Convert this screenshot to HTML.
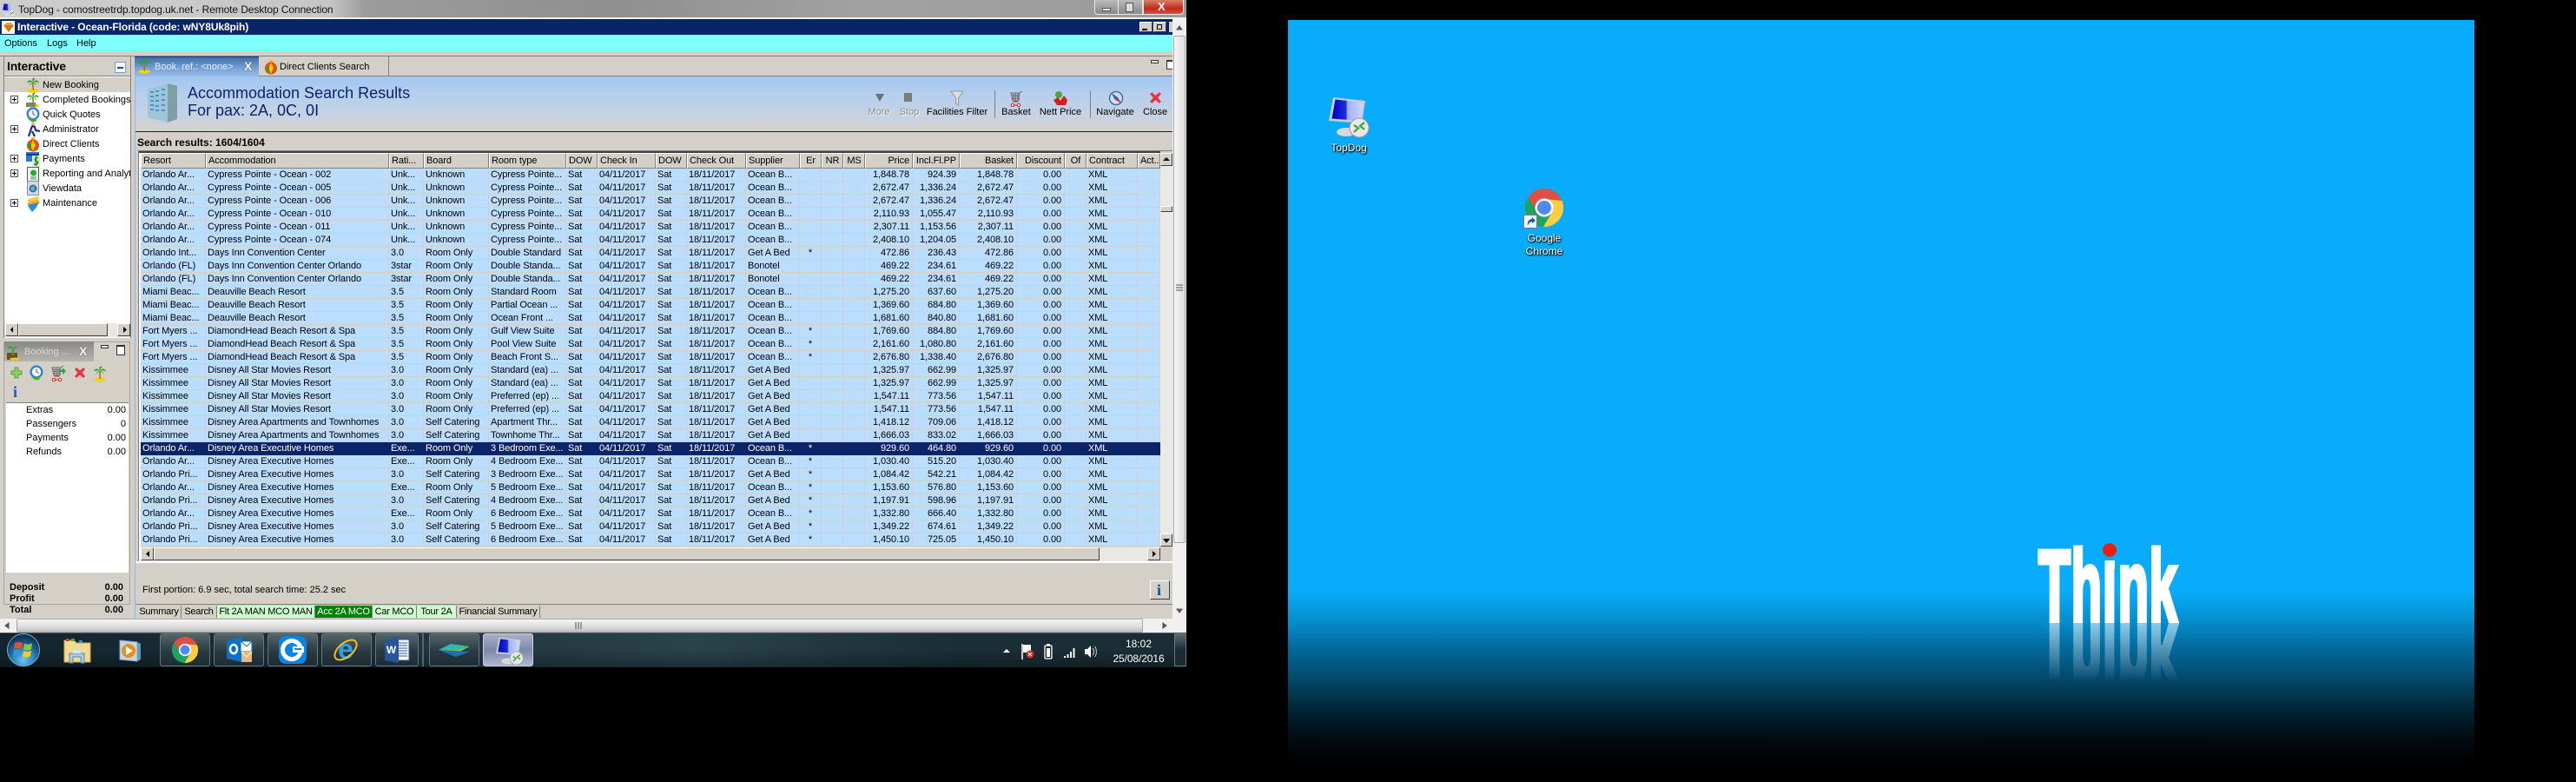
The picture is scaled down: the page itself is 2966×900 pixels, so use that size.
<!DOCTYPE html>
<html><head><meta charset="utf-8"><title>TopDog</title>
<style>
html,body{margin:0;padding:0;background:#000}
body{position:relative;width:2966px;height:900px;overflow:hidden;font-family:"Liberation Sans",sans-serif;font-size:11px;color:#000}
.a{position:absolute}
.t{position:absolute;white-space:nowrap;line-height:14px}
.r{text-align:right}
.b{font-weight:bold}
table{position:absolute;left:162px;top:176px;width:1174px;border-collapse:separate;border-spacing:0;table-layout:fixed;font-size:11px;letter-spacing:-.1px}
th{font-weight:normal;text-align:left;height:18px;padding:0 0 0 2px;background:#d4d0c8;border-top:1px solid #fff;border-left:1px solid #fff;border-right:1px solid #808080;border-bottom:1px solid #808080;box-sizing:border-box;overflow:hidden;white-space:nowrap;line-height:15px}
td{height:15px;box-sizing:border-box;padding:0 0 0 2px;background:#bbddff;border-right:1px solid #d4d0c8;border-bottom:1px solid #d4d0c8;white-space:nowrap;overflow:hidden;line-height:14px}
th.n,td.n{text-align:right;padding:0 3px 0 0}
th.c,td.c{text-align:center;padding:0}
tr.s td{background:#0a246a;color:#fff;border-color:#0a246a}
.btab{position:absolute;top:697px;height:14px;line-height:14px;text-align:center;border-right:1px solid #808080;background:#d4d0c8;white-space:nowrap;overflow:hidden;letter-spacing:-.25px}
.tb{position:absolute;top:729px;width:58px;height:38px;border:1px solid #66777d;border-radius:3px;box-sizing:border-box;background:linear-gradient(#52636a,#2a3a41 55%,#1e2c33)}
</style></head>
<body>
<svg width="0" height="0" style="position:absolute">
<defs>
<linearGradient id="scr" x1="0" y1="0" x2="1" y2="0"><stop offset="0" stop-color="#0000b8"/><stop offset=".45" stop-color="#1b2ee0"/><stop offset=".5" stop-color="#9fb0f5"/><stop offset="1" stop-color="#cfd8ff"/></linearGradient>
<symbol id="palm" viewBox="0 0 16 18"><ellipse cx="8" cy="15.5" rx="7" ry="2.3" fill="#f5d400"/><path d="M7 6L8.6 6 9 15 7.6 15Z" fill="#a5711c"/><path d="M8 6C5 2 2 3 1 7 3 5 5 5 8 6ZM8 6C6 1 9 0 11 1 9 2 9 4 8 6ZM8 6C11 2 14 3 15 7 13 5 11 5 8 6ZM8 6C5 6 4 8 4 10 5 8 6 7 8 6ZM8 6C11 6 12 8 12 10 11 8 10 7 8 6Z" fill="#2f9e1e"/></symbol>
<symbol id="clock" viewBox="0 0 16 18"><circle cx="8" cy="8" r="7.5" fill="#2a83d8"/><circle cx="8" cy="8" r="5.2" fill="#f4f4f4"/><path d="M8 4.5V8L10.5 9.5" stroke="#555" fill="none"/><path d="M1 10C3 15 9 17 14 11L11 17 7 17.5C4 16 2 14 1 10Z" fill="#46b020"/></symbol>
<symbol id="dc" viewBox="0 0 16 18"><circle cx="8" cy="3" r="2.3" fill="#f2b640"/><circle cx="8" cy="10.5" r="7" fill="#e24d1a"/><path d="M8 4L11 10 8 17 5 10Z" fill="#f5c900"/><path d="M2 9H6V14H3Z" fill="#2aa02a"/></symbol>
<symbol id="cross" viewBox="0 0 16 16"><path d="M2 4L4 2 8 5.5 12 2 14 4 10.500 8 14 12 12 14 8 10.500 4 14 2 12 5.500 8Z" fill="#e8343c"/></symbol>
<symbol id="cart" viewBox="0 0 16 20"><path d="M1 3H12L15 1M2 3L4 12H11L12 3M3 5.500H12M3.400 7.500H11.600M3.800 9.500H11.300M5 3V12M7.500 3V12M10 3V12" stroke="#707070" fill="none"/><circle cx="4" cy="17" r="1.700" fill="#fff" stroke="#d01c1c"/><circle cx="11" cy="17" r="1.700" fill="#fff" stroke="#d01c1c"/><path d="M5.700 17H9.300M5 13L10 13" stroke="#d01c1c"/></symbol>
<symbol id="chrome" viewBox="-22 -22 44 44"><path d="M-18.500,-12A22 22 0 0 1 20.600,-8L0,-10-9,4Z" fill="#dd5044"/><path d="M20.600,-8L0,-10 9,5-1,22A22 22 0 0 0 20.600,-8Z" fill="#ffcd40"/><path d="M-18.500,-12L-9,4 9,5-1,22A22 22 0 0 1-18.500,-12Z" fill="#1da462"/><circle r="10.500" fill="#fff"/><circle r="8" fill="#4c8bf5"/></symbol>
<symbol id="rdp" viewBox="0 0 47 47"><ellipse cx="20" cy="41" rx="11" ry="5" fill="#d9d9d9"/><path d="M5 1L42 5 38 31 0 28Z" fill="#c9ccd0"/><path d="M7.500 3.500L39.500 7 36 28 3.500 25.500Z" fill="url(#scr)"/><circle cx="35" cy="36" r="11" fill="#e8e8e8" stroke="#9a9a9a" stroke-width="1"/><path d="M29 33L34 36.500 29 41M41 30L36 34 41 38" stroke="#3aa838" stroke-width="2.200" fill="none"/></symbol>
<linearGradient id="fade" gradientUnits="userSpaceOnUse" x1="0" y1="717" x2="0" y2="785"><stop offset="0" stop-color="#fff" stop-opacity=".55"/><stop offset="1" stop-color="#fff" stop-opacity="0"/></linearGradient>
<mask id="rm" maskUnits="userSpaceOnUse" x="2340" y="717" width="180" height="70"><rect x="2340" y="717" width="180" height="70" fill="url(#fade)"/></mask>
</defs></svg>

<!-- ============ LEFT SCREEN ============ -->
<div class="a" style="left:0;top:0;width:1366px;height:768px;background:#d4d0c8"></div>

<!-- RDP title bar -->
<div class="a" style="left:0;top:0;width:1366px;height:20px;background:linear-gradient(90deg,#cdcdcd 0,#c6c6c6 380px,#9c9c9c 420px,#8f8f8f 700px,#a2a2a2 1000px,#9a9a9a 1366px)"></div>
<div class="a" style="left:0;top:20px;width:1366px;height:2px;background:#f0f0f0"></div>
<svg class="a" style="left:2px;top:3px" width="16" height="16" viewBox="0 0 47 47"><use href="#rdp"/></svg>
<div class="t" style="left:21px;top:4px;font-size:12px;letter-spacing:-.1px;color:#111">TopDog - comostreetrdp.topdog.uk.net - Remote Desktop Connection</div>
<div class="a" style="left:1260px;top:0;width:56px;height:17px;background:linear-gradient(#bbb,#888);border:1px solid #e6e6e6;border-top:0;box-sizing:border-box;border-radius:0 0 0 4px"></div>
<div class="a" style="left:1287px;top:0;width:1px;height:17px;background:#eee"></div>
<div class="a" style="left:1269px;top:9px;width:10px;height:4px;background:#eee;border:1px solid #555;box-sizing:border-box"></div>
<div class="a" style="left:1296px;top:3px;width:9px;height:11px;background:#ddd;border:1px solid #555;box-sizing:border-box"></div>
<div class="a" style="left:1316px;top:0;width:47px;height:17px;background:linear-gradient(#d8806a,#c22b18 60%,#d4523a);border:1px solid #e6e6e6;border-top:0;box-sizing:border-box;border-radius:0 0 4px 0"></div>
<div class="t b" style="left:1333px;top:1px;font-size:13px;color:#fff">X</div>

<!-- App title bar -->
<div class="a" style="left:0;top:22px;width:1350px;height:18px;background:#0a246a"></div>
<div class="a" style="left:2px;top:24px;width:15px;height:15px;background:#fff"></div>
<svg class="a" style="left:3px;top:26px" width="14" height="12" viewBox="0 0 14 12"><path d="M1 3L5 0H10L13 3 7 11Z" fill="#f2a428"/><path d="M1 3H13L7 11Z" fill="#d97a10"/></svg>
<div class="t b" style="left:20px;top:24px;font-size:12px;letter-spacing:-.1px;color:#fff">Interactive - Ocean-Florida (code: wNY8Uk8pih)</div>
<div class="a" style="left:1312px;top:25px;width:15px;height:12px;background:#d4d0c8;border:1px solid;border-color:#fff #404040 #404040 #fff;box-sizing:border-box"></div>
<div class="a" style="left:1315px;top:33px;width:6px;height:2px;background:#000"></div>
<div class="a" style="left:1328px;top:25px;width:15px;height:12px;background:#d4d0c8;border:1px solid;border-color:#fff #404040 #404040 #fff;box-sizing:border-box"></div>
<div class="a" style="left:1332px;top:28px;width:6px;height:6px;border:1px solid #000;box-sizing:border-box"></div>
<div class="a" style="left:1346px;top:25px;width:4px;height:12px;background:#d4d0c8"></div>

<!-- Menu -->
<div class="a" style="left:0;top:40px;width:1350px;height:19px;background:#80ffff"></div>
<div class="t" style="left:5px;top:43px">Options</div>
<div class="t" style="left:54px;top:43px">Logs</div>
<div class="t" style="left:88px;top:43px">Help</div>

<!-- Left pane 1 -->
<div class="a" style="left:0;top:64px;width:1350px;height:1px;background:#808080"></div>
<div class="a" style="left:4px;top:65px;width:147px;height:324px;background:#fff;border-right:1px solid #808080;border-left:1px solid #808080;box-sizing:border-box"></div>
<div class="a" style="left:5px;top:65px;width:145px;height:23px;background:#d4d0c8;border-bottom:1px solid #808080;box-sizing:border-box"></div>
<div class="t b" style="left:8px;top:69px;font-size:14px;letter-spacing:-.2px">Interactive</div>
<div class="a" style="left:132px;top:71px;width:13px;height:13px;background:#fff;border:1px solid #7f9db9;box-sizing:border-box"></div>
<div class="a" style="left:135px;top:77px;width:7px;height:2px;background:#1a4a9c"></div>
<div class="a" style="left:5px;top:89px;width:145px;height:17px;background:#d4d0c8"></div>
<div class="t" style="left:49px;top:91px">New Booking</div>
<div class="t" style="left:49px;top:108px">Completed Bookings</div>
<div class="t" style="left:49px;top:125px">Quick Quotes</div>
<div class="t" style="left:49px;top:142px">Administrator</div>
<div class="t" style="left:49px;top:159px">Direct Clients</div>
<div class="t" style="left:49px;top:176px">Payments</div>
<div class="a" style="left:49px;top:193px;width:101px;height:14px;overflow:hidden"><div class="t" style="left:0;top:0">Reporting and Analytics</div></div>
<div class="t" style="left:49px;top:210px">Viewdata</div>
<div class="t" style="left:49px;top:227px">Maintenance</div>
<!-- tree expanders -->
<svg class="a" style="left:0;top:88px" width="50" height="160" viewBox="0 0 50 160">
<g fill="#fff" stroke="#555"><rect x="12.500" y="22.500" width="8" height="8"/><rect x="12.500" y="56.500" width="8" height="8"/><rect x="12.500" y="90.500" width="8" height="8"/><rect x="12.500" y="107.500" width="8" height="8"/><rect x="12.500" y="141.500" width="8" height="8"/></g>
<path d="M14 26.500H19M16.500 24V29M14 60.500H19M16.500 58V63M14 94.500H19M16.500 92V97M14 111.500H19M16.500 109V114M14 145.500H19M16.500 143V148" stroke="#000"/>
</svg>
<!-- tree icons -->
<svg class="a" style="left:30px;top:89px" width="16" height="18"><use href="#palm" width="16" height="18"/></svg>
<svg class="a" style="left:30px;top:106px" width="16" height="18"><use href="#palm" width="16" height="18"/><rect x="0" y="12" width="11" height="5" fill="#7a8a58"/></svg>
<svg class="a" style="left:30px;top:123px" width="16" height="18"><use href="#clock" width="16" height="18"/></svg>
<svg class="a" style="left:32px;top:140px" width="15" height="18" viewBox="0 0 15 18"><circle cx="6" cy="3" r="2.200" fill="#e9b46a"/><path d="M5 5L8 6 9 10 14 11M5 5L3 11 1 17M5 11L8 17" stroke="#1a2f86" stroke-width="2.200" fill="none"/></svg>
<svg class="a" style="left:30px;top:157px" width="16" height="18"><use href="#dc" width="16" height="18"/></svg>
<svg class="a" style="left:30px;top:175px" width="16" height="18" viewBox="0 0 16 18"><rect width="15" height="11" fill="#2a78d8"/><rect y="2" width="15" height="2" fill="#0f3c88"/><rect x="7" y="4" width="9" height="14" fill="#d6f0c8"/><path d="M14 7C10 5 9 10 12 10.500 15 11 14 15 9 14M11.500 4.500V16" stroke="#1c8c22" stroke-width="1.500" fill="none"/></svg>
<svg class="a" style="left:31px;top:192px" width="15" height="18" viewBox="0 0 15 18"><rect x=".5" y=".5" width="13" height="16" fill="#f2f2f2" stroke="#4a5a6a"/><circle cx="7.500" cy="7" r="3.500" fill="#28a83a"/><path d="M4 12H11M4 14H11" stroke="#28a83a"/></svg>
<svg class="a" style="left:31px;top:208px" width="15" height="18" viewBox="0 0 15 18"><rect x=".5" y=".5" width="13" height="16" fill="#d8d8e4" stroke="#8b8b9b"/><circle cx="7" cy="9" r="4.500" fill="#2f72d0"/><path d="M4 8L8 6 9 10 6 12Z" fill="#7cc05a"/></svg>
<svg class="a" style="left:31px;top:226px" width="15" height="18" viewBox="0 0 15 18"><path d="M0 4L12 0 15 3 3 8Z" fill="#f4c63a"/><path d="M0 8L13 4 15 7 3 12Z" fill="#e7a820"/><path d="M1 10L14 7 10 14 6 18 3 14Z" fill="#2c8ad8"/></svg>

<!-- tree h-scrollbar -->
<div class="a" style="left:5px;top:372px;width:145px;height:16px;background:#e9e7e3"></div>
<div class="a" style="left:6px;top:372px;width:15px;height:15px;background:#d4d0c8;border:1px solid;border-color:#fff #404040 #404040 #fff;box-sizing:border-box"></div>
<div class="a" style="left:21px;top:372px;width:103px;height:15px;background:#d4d0c8;border:1px solid;border-color:#fff #404040 #404040 #fff;box-sizing:border-box"></div>
<div class="a" style="left:135px;top:372px;width:15px;height:15px;background:#d4d0c8;border:1px solid;border-color:#fff #404040 #404040 #fff;box-sizing:border-box"></div>
<svg class="a" style="left:6px;top:372px" width="144" height="15"><path d="M9 4V11L6 7.500ZM136 4V11L140 7.500Z" fill="#000"/></svg>

<!-- Left pane 2 Booking -->
<div class="a" style="left:4px;top:393px;width:146px;height:303px;background:#d4d0c8;border:1px solid #a9a69e;box-sizing:border-box"></div>
<div class="a" style="left:5px;top:393px;width:103px;height:23px;background:linear-gradient(#888,#b6b4ae)"></div>
<svg class="a" style="left:7px;top:396px" width="18" height="19" viewBox="0 0 18 19"><rect x="1" y="10" width="12" height="8" fill="#6e4a20"/><path d="M7 3C4 1 2 3 1 6 3 4 6 5 8 6 8 3 11 2 14 4 12 4 10 5 9 7L9 13H7Z" fill="#3fa22a"/><ellipse cx="10" cy="17" rx="6" ry="1.500" fill="#e8c428"/></svg>
<div class="t" style="left:28px;top:398px;color:#d8d8d8">Booking ...</div>
<div class="t b" style="left:91px;top:397px;font-size:14px;color:#fff;text-shadow:0 0 1px #000">X</div>
<div class="a" style="left:116px;top:397px;width:9px;height:4px;background:#fff;border:1px solid #333;box-sizing:border-box"></div>
<div class="a" style="left:134px;top:397px;width:10px;height:12px;background:#fff;border:1px solid #333;border-top-width:2px;box-sizing:border-box"></div>
<div class="a" style="left:7px;top:417px;width:141px;height:47px;background:#d4d0c8;border-bottom:1px solid #808080;box-sizing:border-box"></div>
<svg class="a" style="left:11px;top:421px" width="16" height="16" viewBox="0 0 16 16"><path d="M6 2H10V6H14V10H10V14H6V10H2V6H6Z" fill="#8fd060" stroke="#5f9c3a"/></svg>
<svg class="a" style="left:34px;top:420px" width="16" height="18"><use href="#clock" width="16" height="18"/></svg>
<svg class="a" style="left:58px;top:420px" width="18" height="20" viewBox="0 0 18 20"><use href="#cart" width="16" height="20"/><path d="M10 6H14V3L18 7 14 11V8H10Z" fill="#28a83a"/></svg>
<svg class="a" style="left:84px;top:421px" width="16" height="16"><use href="#cross" width="16" height="16"/></svg>
<svg class="a" style="left:107px;top:421px" width="16" height="18"><use href="#palm" width="16" height="18"/></svg>
<div class="t b" style="left:15px;top:443px;font-family:'Liberation Serif',serif;font-size:18px;line-height:16px;color:#1c5ab4">i</div>
<div class="a" style="left:7px;top:464px;width:141px;height:195px;background:#fff"></div>
<div class="t" style="left:30px;top:465px">Extras</div><div class="t r" style="right:2821px;top:465px">0.00</div>
<div class="t" style="left:30px;top:481px">Passengers</div><div class="t r" style="right:2821px;top:481px">0</div>
<div class="t" style="left:30px;top:497px">Payments</div><div class="t r" style="right:2821px;top:497px">0.00</div>
<div class="t" style="left:30px;top:513px">Refunds</div><div class="t r" style="right:2821px;top:513px">0.00</div>
<div class="t b" style="left:11px;top:669px">Deposit</div><div class="t b r" style="right:2824px;top:669px">0.00</div>
<div class="t b" style="left:11px;top:682px">Profit</div><div class="t b r" style="right:2824px;top:682px">0.00</div>
<div class="t b" style="left:11px;top:695px">Total</div><div class="t b r" style="right:2824px;top:695px">0.00</div>

<!-- Right content -->
<div class="a" style="left:155px;top:64px;width:1px;height:647px;background:#8fb5e5"></div>
<div class="a" style="left:155px;top:65px;width:143px;height:23px;background:linear-gradient(#3f6fb0,#7ba3d8 60%,#98bbe8);border-top:1px solid #1a3f86;box-sizing:border-box"></div>
<svg class="a" style="left:158px;top:67px" width="16" height="18"><use href="#palm" width="16" height="18"/></svg>
<div class="t" style="left:178px;top:70px;color:#e4ecf6">Book. ref.: &lt;none&gt;</div>
<div class="t b" style="left:281px;top:69px;font-size:14px;color:#fff;text-shadow:0 0 1px #000">X</div>
<div class="a" style="left:298px;top:65px;width:150px;height:23px;background:#d4d0c8;border-right:1px solid #808080;border-bottom:1px solid #808080;box-sizing:border-box"></div>
<svg class="a" style="left:304px;top:68px" width="16" height="18"><use href="#dc" width="16" height="18"/></svg>
<div class="t" style="left:322px;top:70px">Direct Clients Search</div>
<div class="a" style="left:1325px;top:69px;width:9px;height:4px;background:#fff;border:1px solid #333;box-sizing:border-box"></div>
<div class="a" style="left:1343px;top:69px;width:7px;height:11px;background:#fff;border:1px solid #333;border-right:0;border-top-width:2px;box-sizing:border-box"></div>
<div class="a" style="left:448px;top:87px;width:902px;height:1px;background:#808080"></div>

<!-- heading band -->
<div class="a" style="left:156px;top:88px;width:1194px;height:63px;background:linear-gradient(#a2c6f2,#b6cfee 35%,#c6d2e2 70%,#d4d3cf)"></div>
<div class="a" style="left:156px;top:151px;width:1194px;height:1px;background:#0a246a"></div>
<svg class="a" style="left:169px;top:95px" width="36" height="48" viewBox="0 0 36 48"><path d="M1 8L24 1V46L1 40Z" fill="#9fc4d8"/><path d="M24 1L35 4V42L24 46Z" fill="#7f9ea6"/><g fill="#3d9ad0"><rect x="4" y="10" width="4" height="2"/><rect x="10" y="9" width="4" height="2"/><rect x="17" y="7" width="4" height="2"/><rect x="4" y="15" width="4" height="2"/><rect x="10" y="14" width="4" height="2"/><rect x="17" y="13" width="4" height="2"/><rect x="4" y="20" width="4" height="2"/><rect x="10" y="20" width="4" height="2"/><rect x="17" y="19" width="4" height="2"/><rect x="4" y="25" width="4" height="2"/><rect x="10" y="26" width="4" height="2"/><rect x="17" y="25" width="4" height="2"/><rect x="4" y="30" width="4" height="2"/><rect x="10" y="31" width="4" height="2"/><rect x="17" y="31" width="4" height="2"/></g></svg>
<div class="t" style="left:216px;top:97px;font-size:18px;line-height:20px;color:#0a246a">Accommodation Search Results</div>
<div class="t" style="left:216px;top:117px;font-size:18px;line-height:20px;color:#0a246a">For pax: 2A, 0C, 0I</div>

<!-- toolbar -->
<svg class="a" style="left:1006px;top:105px" width="14" height="14"><path d="M2 3H12L7 12Z" fill="#707070"/></svg>
<svg class="a" style="left:1041px;top:107px" width="10" height="12"><rect width="9" height="10" fill="#7a7a7a"/></svg>
<svg class="a" style="left:1094px;top:104px" width="16" height="18" viewBox="0 0 16 18"><path d="M1 1H15L9.500 9V17L6.500 15V9Z" fill="#ddd" stroke="#999"/></svg>
<svg class="a" style="left:1162px;top:104px" width="16" height="20"><use href="#cart" width="16" height="20"/></svg>
<svg class="a" style="left:1212px;top:104px" width="18" height="18" viewBox="0 0 18 18"><circle cx="7" cy="5" r="4" fill="#52a43a"/><path d="M1 11L6 8 9 12 13 6 17 11 15 17 5 17Z" fill="#d81c22"/></svg>
<svg class="a" style="left:1276px;top:104px" width="18" height="18" viewBox="0 0 18 18"><circle cx="9" cy="9" r="7.500" fill="#cfe0f2" stroke="#4a6ea0" stroke-width="1.500"/><path d="M4 3L11 8 15 15 7 10Z" fill="#3f5fa8"/><path d="M11 8L15 15 9 11Z" fill="#d03030"/></svg>
<svg class="a" style="left:1322px;top:104px" width="17" height="17"><use href="#cross" width="17" height="17"/></svg>
<div class="t" style="left:992px;width:40px;text-align:center;top:122px;color:#8a8a8a;text-shadow:1px 1px 0 #fff">More</div>
<div class="t" style="left:1027px;width:40px;text-align:center;top:122px;color:#8a8a8a;text-shadow:1px 1px 0 #fff">Stop</div>
<div class="t" style="left:1062px;width:80px;text-align:center;top:122px">Facilities Filter</div>
<div class="t" style="left:1150px;width:40px;text-align:center;top:122px">Basket</div>
<div class="t" style="left:1191px;width:60px;text-align:center;top:122px">Nett Price</div>
<div class="t" style="left:1254px;width:60px;text-align:center;top:122px">Navigate</div>
<div class="t" style="left:1310px;width:40px;text-align:center;top:122px">Close</div>
<div class="a" style="left:1145px;top:104px;width:1px;height:32px;background:#808080"></div>
<div class="a" style="left:1255px;top:104px;width:1px;height:32px;background:#808080"></div>

<div class="t b" style="left:158px;top:157px;font-size:12px">Search results: 1604/1604</div>

<!-- grid frame -->
<div class="a" style="left:159px;top:173px;width:1191px;height:1px;background:#808080"></div>
<div class="a" style="left:159px;top:173px;width:1px;height:474px;background:#808080"></div>
<div class="a" style="left:160px;top:174px;width:2px;height:472px;background:#fff"></div>
<div class="a" style="left:160px;top:174px;width:1176px;height:2px;background:#404040"></div>
<div class="a" style="left:156px;top:646px;width:1194px;height:2px;background:#fff"></div>

<table>
<colgroup><col style="width:75px"><col style="width:211px"><col style="width:40px"><col style="width:75px"><col style="width:89px"><col style="width:36px"><col style="width:67px"><col style="width:36px"><col style="width:68px"><col style="width:62px"><col style="width:25px"><col style="width:25px"><col style="width:25px"><col style="width:55px"><col style="width:54px"><col style="width:66px"><col style="width:55px"><col style="width:25px"><col style="width:59px"><col style="width:26px"></colgroup>
<tr><th>Resort</th><th>Accommodation</th><th>Rati...</th><th>Board</th><th>Room type</th><th>DOW</th><th>Check In</th><th>DOW</th><th>Check Out</th><th>Supplier</th><th class="c">Er</th><th class="c">NR</th><th class="c">MS</th><th class="n">Price</th><th class="n">Incl.Fl.PP</th><th class="n">Basket</th><th class="n">Discount</th><th class="c">Of</th><th>Contract</th><th>Act...</th></tr>
<tr><td>Orlando Ar...</td><td>Cypress Pointe - Ocean - 002</td><td>Unk...</td><td>Unknown</td><td>Cypress Pointe...</td><td>Sat</td><td>04/11/2017</td><td>Sat</td><td>18/11/2017</td><td>Ocean B...</td><td class="c"></td><td></td><td></td><td class="n">1,848.78</td><td class="n">924.39</td><td class="n">1,848.78</td><td class="n">0.00</td><td></td><td>XML</td><td></td></tr>
<tr><td>Orlando Ar...</td><td>Cypress Pointe - Ocean - 005</td><td>Unk...</td><td>Unknown</td><td>Cypress Pointe...</td><td>Sat</td><td>04/11/2017</td><td>Sat</td><td>18/11/2017</td><td>Ocean B...</td><td class="c"></td><td></td><td></td><td class="n">2,672.47</td><td class="n">1,336.24</td><td class="n">2,672.47</td><td class="n">0.00</td><td></td><td>XML</td><td></td></tr>
<tr><td>Orlando Ar...</td><td>Cypress Pointe - Ocean - 006</td><td>Unk...</td><td>Unknown</td><td>Cypress Pointe...</td><td>Sat</td><td>04/11/2017</td><td>Sat</td><td>18/11/2017</td><td>Ocean B...</td><td class="c"></td><td></td><td></td><td class="n">2,672.47</td><td class="n">1,336.24</td><td class="n">2,672.47</td><td class="n">0.00</td><td></td><td>XML</td><td></td></tr>
<tr><td>Orlando Ar...</td><td>Cypress Pointe - Ocean - 010</td><td>Unk...</td><td>Unknown</td><td>Cypress Pointe...</td><td>Sat</td><td>04/11/2017</td><td>Sat</td><td>18/11/2017</td><td>Ocean B...</td><td class="c"></td><td></td><td></td><td class="n">2,110.93</td><td class="n">1,055.47</td><td class="n">2,110.93</td><td class="n">0.00</td><td></td><td>XML</td><td></td></tr>
<tr><td>Orlando Ar...</td><td>Cypress Pointe - Ocean - 011</td><td>Unk...</td><td>Unknown</td><td>Cypress Pointe...</td><td>Sat</td><td>04/11/2017</td><td>Sat</td><td>18/11/2017</td><td>Ocean B...</td><td class="c"></td><td></td><td></td><td class="n">2,307.11</td><td class="n">1,153.56</td><td class="n">2,307.11</td><td class="n">0.00</td><td></td><td>XML</td><td></td></tr>
<tr><td>Orlando Ar...</td><td>Cypress Pointe - Ocean - 074</td><td>Unk...</td><td>Unknown</td><td>Cypress Pointe...</td><td>Sat</td><td>04/11/2017</td><td>Sat</td><td>18/11/2017</td><td>Ocean B...</td><td class="c"></td><td></td><td></td><td class="n">2,408.10</td><td class="n">1,204.05</td><td class="n">2,408.10</td><td class="n">0.00</td><td></td><td>XML</td><td></td></tr>
<tr><td>Orlando Int...</td><td>Days Inn Convention Center</td><td>3.0</td><td>Room Only</td><td>Double Standard</td><td>Sat</td><td>04/11/2017</td><td>Sat</td><td>18/11/2017</td><td>Get A Bed</td><td class="c">*</td><td></td><td></td><td class="n">472.86</td><td class="n">236.43</td><td class="n">472.86</td><td class="n">0.00</td><td></td><td>XML</td><td></td></tr>
<tr><td>Orlando (FL)</td><td>Days Inn Convention Center Orlando</td><td>3star</td><td>Room Only</td><td>Double Standa...</td><td>Sat</td><td>04/11/2017</td><td>Sat</td><td>18/11/2017</td><td>Bonotel</td><td class="c"></td><td></td><td></td><td class="n">469.22</td><td class="n">234.61</td><td class="n">469.22</td><td class="n">0.00</td><td></td><td>XML</td><td></td></tr>
<tr><td>Orlando (FL)</td><td>Days Inn Convention Center Orlando</td><td>3star</td><td>Room Only</td><td>Double Standa...</td><td>Sat</td><td>04/11/2017</td><td>Sat</td><td>18/11/2017</td><td>Bonotel</td><td class="c"></td><td></td><td></td><td class="n">469.22</td><td class="n">234.61</td><td class="n">469.22</td><td class="n">0.00</td><td></td><td>XML</td><td></td></tr>
<tr><td>Miami Beac...</td><td>Deauville Beach Resort</td><td>3.5</td><td>Room Only</td><td>Standard Room</td><td>Sat</td><td>04/11/2017</td><td>Sat</td><td>18/11/2017</td><td>Ocean B...</td><td class="c"></td><td></td><td></td><td class="n">1,275.20</td><td class="n">637.60</td><td class="n">1,275.20</td><td class="n">0.00</td><td></td><td>XML</td><td></td></tr>
<tr><td>Miami Beac...</td><td>Deauville Beach Resort</td><td>3.5</td><td>Room Only</td><td>Partial Ocean ...</td><td>Sat</td><td>04/11/2017</td><td>Sat</td><td>18/11/2017</td><td>Ocean B...</td><td class="c"></td><td></td><td></td><td class="n">1,369.60</td><td class="n">684.80</td><td class="n">1,369.60</td><td class="n">0.00</td><td></td><td>XML</td><td></td></tr>
<tr><td>Miami Beac...</td><td>Deauville Beach Resort</td><td>3.5</td><td>Room Only</td><td>Ocean Front ...</td><td>Sat</td><td>04/11/2017</td><td>Sat</td><td>18/11/2017</td><td>Ocean B...</td><td class="c"></td><td></td><td></td><td class="n">1,681.60</td><td class="n">840.80</td><td class="n">1,681.60</td><td class="n">0.00</td><td></td><td>XML</td><td></td></tr>
<tr><td>Fort Myers ...</td><td>DiamondHead Beach Resort &amp; Spa</td><td>3.5</td><td>Room Only</td><td>Gulf View Suite</td><td>Sat</td><td>04/11/2017</td><td>Sat</td><td>18/11/2017</td><td>Ocean B...</td><td class="c">*</td><td></td><td></td><td class="n">1,769.60</td><td class="n">884.80</td><td class="n">1,769.60</td><td class="n">0.00</td><td></td><td>XML</td><td></td></tr>
<tr><td>Fort Myers ...</td><td>DiamondHead Beach Resort &amp; Spa</td><td>3.5</td><td>Room Only</td><td>Pool View Suite</td><td>Sat</td><td>04/11/2017</td><td>Sat</td><td>18/11/2017</td><td>Ocean B...</td><td class="c">*</td><td></td><td></td><td class="n">2,161.60</td><td class="n">1,080.80</td><td class="n">2,161.60</td><td class="n">0.00</td><td></td><td>XML</td><td></td></tr>
<tr><td>Fort Myers ...</td><td>DiamondHead Beach Resort &amp; Spa</td><td>3.5</td><td>Room Only</td><td>Beach Front S...</td><td>Sat</td><td>04/11/2017</td><td>Sat</td><td>18/11/2017</td><td>Ocean B...</td><td class="c">*</td><td></td><td></td><td class="n">2,676.80</td><td class="n">1,338.40</td><td class="n">2,676.80</td><td class="n">0.00</td><td></td><td>XML</td><td></td></tr>
<tr><td>Kissimmee</td><td>Disney All Star Movies Resort</td><td>3.0</td><td>Room Only</td><td>Standard (ea) ...</td><td>Sat</td><td>04/11/2017</td><td>Sat</td><td>18/11/2017</td><td>Get A Bed</td><td class="c"></td><td></td><td></td><td class="n">1,325.97</td><td class="n">662.99</td><td class="n">1,325.97</td><td class="n">0.00</td><td></td><td>XML</td><td></td></tr>
<tr><td>Kissimmee</td><td>Disney All Star Movies Resort</td><td>3.0</td><td>Room Only</td><td>Standard (ea) ...</td><td>Sat</td><td>04/11/2017</td><td>Sat</td><td>18/11/2017</td><td>Get A Bed</td><td class="c"></td><td></td><td></td><td class="n">1,325.97</td><td class="n">662.99</td><td class="n">1,325.97</td><td class="n">0.00</td><td></td><td>XML</td><td></td></tr>
<tr><td>Kissimmee</td><td>Disney All Star Movies Resort</td><td>3.0</td><td>Room Only</td><td>Preferred (ep) ...</td><td>Sat</td><td>04/11/2017</td><td>Sat</td><td>18/11/2017</td><td>Get A Bed</td><td class="c"></td><td></td><td></td><td class="n">1,547.11</td><td class="n">773.56</td><td class="n">1,547.11</td><td class="n">0.00</td><td></td><td>XML</td><td></td></tr>
<tr><td>Kissimmee</td><td>Disney All Star Movies Resort</td><td>3.0</td><td>Room Only</td><td>Preferred (ep) ...</td><td>Sat</td><td>04/11/2017</td><td>Sat</td><td>18/11/2017</td><td>Get A Bed</td><td class="c"></td><td></td><td></td><td class="n">1,547.11</td><td class="n">773.56</td><td class="n">1,547.11</td><td class="n">0.00</td><td></td><td>XML</td><td></td></tr>
<tr><td>Kissimmee</td><td>Disney Area Apartments and Townhomes</td><td>3.0</td><td>Self Catering</td><td>Apartment Thr...</td><td>Sat</td><td>04/11/2017</td><td>Sat</td><td>18/11/2017</td><td>Get A Bed</td><td class="c"></td><td></td><td></td><td class="n">1,418.12</td><td class="n">709.06</td><td class="n">1,418.12</td><td class="n">0.00</td><td></td><td>XML</td><td></td></tr>
<tr><td>Kissimmee</td><td>Disney Area Apartments and Townhomes</td><td>3.0</td><td>Self Catering</td><td>Townhome Thr...</td><td>Sat</td><td>04/11/2017</td><td>Sat</td><td>18/11/2017</td><td>Get A Bed</td><td class="c"></td><td></td><td></td><td class="n">1,666.03</td><td class="n">833.02</td><td class="n">1,666.03</td><td class="n">0.00</td><td></td><td>XML</td><td></td></tr>
<tr class="s"><td>Orlando Ar...</td><td>Disney Area Executive Homes</td><td>Exe...</td><td>Room Only</td><td>3 Bedroom Exe...</td><td>Sat</td><td>04/11/2017</td><td>Sat</td><td>18/11/2017</td><td>Ocean B...</td><td class="c">*</td><td></td><td></td><td class="n">929.60</td><td class="n">464.80</td><td class="n">929.60</td><td class="n">0.00</td><td></td><td>XML</td><td></td></tr>
<tr><td>Orlando Ar...</td><td>Disney Area Executive Homes</td><td>Exe...</td><td>Room Only</td><td>4 Bedroom Exe...</td><td>Sat</td><td>04/11/2017</td><td>Sat</td><td>18/11/2017</td><td>Ocean B...</td><td class="c">*</td><td></td><td></td><td class="n">1,030.40</td><td class="n">515.20</td><td class="n">1,030.40</td><td class="n">0.00</td><td></td><td>XML</td><td></td></tr>
<tr><td>Orlando Pri...</td><td>Disney Area Executive Homes</td><td>3.0</td><td>Self Catering</td><td>3 Bedroom Exe...</td><td>Sat</td><td>04/11/2017</td><td>Sat</td><td>18/11/2017</td><td>Get A Bed</td><td class="c">*</td><td></td><td></td><td class="n">1,084.42</td><td class="n">542.21</td><td class="n">1,084.42</td><td class="n">0.00</td><td></td><td>XML</td><td></td></tr>
<tr><td>Orlando Ar...</td><td>Disney Area Executive Homes</td><td>Exe...</td><td>Room Only</td><td>5 Bedroom Exe...</td><td>Sat</td><td>04/11/2017</td><td>Sat</td><td>18/11/2017</td><td>Ocean B...</td><td class="c">*</td><td></td><td></td><td class="n">1,153.60</td><td class="n">576.80</td><td class="n">1,153.60</td><td class="n">0.00</td><td></td><td>XML</td><td></td></tr>
<tr><td>Orlando Pri...</td><td>Disney Area Executive Homes</td><td>3.0</td><td>Self Catering</td><td>4 Bedroom Exe...</td><td>Sat</td><td>04/11/2017</td><td>Sat</td><td>18/11/2017</td><td>Get A Bed</td><td class="c">*</td><td></td><td></td><td class="n">1,197.91</td><td class="n">598.96</td><td class="n">1,197.91</td><td class="n">0.00</td><td></td><td>XML</td><td></td></tr>
<tr><td>Orlando Ar...</td><td>Disney Area Executive Homes</td><td>Exe...</td><td>Room Only</td><td>6 Bedroom Exe...</td><td>Sat</td><td>04/11/2017</td><td>Sat</td><td>18/11/2017</td><td>Ocean B...</td><td class="c">*</td><td></td><td></td><td class="n">1,332.80</td><td class="n">666.40</td><td class="n">1,332.80</td><td class="n">0.00</td><td></td><td>XML</td><td></td></tr>
<tr><td>Orlando Pri...</td><td>Disney Area Executive Homes</td><td>3.0</td><td>Self Catering</td><td>5 Bedroom Exe...</td><td>Sat</td><td>04/11/2017</td><td>Sat</td><td>18/11/2017</td><td>Get A Bed</td><td class="c">*</td><td></td><td></td><td class="n">1,349.22</td><td class="n">674.61</td><td class="n">1,349.22</td><td class="n">0.00</td><td></td><td>XML</td><td></td></tr>
<tr><td>Orlando Pri...</td><td>Disney Area Executive Homes</td><td>3.0</td><td>Self Catering</td><td>6 Bedroom Exe...</td><td>Sat</td><td>04/11/2017</td><td>Sat</td><td>18/11/2017</td><td>Get A Bed</td><td class="c">*</td><td></td><td></td><td class="n">1,450.10</td><td class="n">725.05</td><td class="n">1,450.10</td><td class="n">0.00</td><td></td><td>XML</td><td></td></tr>
</table>

<!-- grid v-scrollbar -->
<div class="a" style="left:1336px;top:176px;width:14px;height:453px;background:#ebe9e5"></div>
<div class="a" style="left:1336px;top:176px;width:14px;height:15px;background:#d4d0c8;border:1px solid;border-color:#fff #404040 #404040 #fff;box-sizing:border-box"></div>
<div class="a" style="left:1336px;top:237px;width:14px;height:7px;background:#d4d0c8;border:1px solid;border-color:#fff #404040 #404040 #fff;box-sizing:border-box"></div>
<div class="a" style="left:1336px;top:614px;width:14px;height:15px;background:#d4d0c8;border:1px solid;border-color:#fff #404040 #404040 #fff;box-sizing:border-box"></div>
<svg class="a" style="left:1336px;top:176px" width="14" height="453"><path d="M3 9H11L7 5ZM3 444H11L7 449Z" fill="#000"/></svg>
<!-- grid h-scrollbar -->
<div class="a" style="left:162px;top:630px;width:1174px;height:16px;background:#ebe9e5"></div>
<div class="a" style="left:162px;top:630px;width:15px;height:15px;background:#d4d0c8;border:1px solid;border-color:#fff #404040 #404040 #fff;box-sizing:border-box"></div>
<div class="a" style="left:177px;top:630px;width:1089px;height:15px;background:#d4d0c8;border:1px solid;border-color:#fff #404040 #404040 #fff;box-sizing:border-box"></div>
<div class="a" style="left:1321px;top:630px;width:15px;height:15px;background:#d4d0c8;border:1px solid;border-color:#fff #404040 #404040 #fff;box-sizing:border-box"></div>
<svg class="a" style="left:162px;top:630px" width="1174" height="15"><path d="M10 4V11L6 7.500ZM1165 4V11L1169 7.500Z" fill="#000"/></svg>

<!-- status -->
<div class="t" style="left:164px;top:672px">First portion: 6.9 sec, total search time: 25.2 sec</div>
<div class="a" style="left:1324px;top:668px;width:23px;height:22px;background:#d4d0c8;border:1px solid;border-color:#fff #404040 #404040 #fff;box-sizing:border-box"></div>
<div class="t b" style="left:1332px;top:671px;font-family:'Liberation Serif',serif;font-size:18px;line-height:16px;color:#0a4fa8">i</div>
<div class="a" style="left:156px;top:695px;width:1194px;height:1px;background:#808080"></div>
<!-- bottom tabs -->
<div class="btab" style="left:158px;width:50px">Summary</div>
<div class="btab" style="left:209px;width:40px">Search</div>
<div class="btab" style="left:250px;width:112px;background:#ccffcc">Flt 2A MAN MCO MAN</div>
<div class="btab" style="left:363px;width:65px;background:#008000;color:#fff">Acc 2A MCO</div>
<div class="btab" style="left:429px;width:50px;background:#ccffcc">Car MCO</div>
<div class="btab" style="left:480px;width:45px;background:#ccffcc">Tour 2A</div>
<div class="btab" style="left:526px;width:95px">Financial Summary</div>

<!-- RDP v-scrollbar -->
<div class="a" style="left:1350px;top:22px;width:16px;height:690px;background:#f0f0f0"></div>
<div class="a" style="left:1351px;top:41px;width:14px;height:584px;background:linear-gradient(90deg,#f6f6f6,#dcdcdc);border:1px solid #a8a8a8;box-sizing:border-box;border-radius:2px"></div>
<svg class="a" style="left:1350px;top:22px" width="16" height="690"><path d="M5 12H11L8 8ZM5 679H11L8 683ZM4 306H12M4 309H12M4 312H12" stroke-width="1" fill="#555" stroke="#555"/></svg>
<!-- RDP h-scrollbar -->
<div class="a" style="left:0;top:712px;width:1366px;height:16px;background:#f0f0f0"></div>
<div class="a" style="left:19px;top:712px;width:1297px;height:16px;background:linear-gradient(#f6f6f6,#dcdcdc 60%,#c0c0c0);border:1px solid #a8a8a8;box-sizing:border-box;border-radius:2px"></div>
<svg class="a" style="left:0;top:712px" width="1366" height="16"><path d="M10 5V11L6 8ZM1339 5V11L1343 8ZM663 4V12M666 4V12M669 4V12" stroke="#555" fill="#555"/></svg>

<!-- Taskbar -->
<div class="a" style="left:0;top:728px;width:1366px;height:40px;background:linear-gradient(90deg,#12242c 0,#20353d 500px,#2a424b 800px,#1a2e36 1100px,#1a2c34 1366px);border-top:1px solid #4c5a60;box-sizing:border-box"></div>
<div class="a" style="left:0;top:748px;width:1366px;height:20px;background:linear-gradient(rgba(0,0,0,0),rgba(0,0,0,.3))"></div>
<svg class="a" style="left:7px;top:729px" width="40" height="38" viewBox="0 0 40 38"><defs><radialGradient id="orb" cx=".5" cy=".8" r=".7"><stop offset="0" stop-color="#6cc8ee"/><stop offset=".6" stop-color="#1c6ea8"/><stop offset="1" stop-color="#0b3558"/></radialGradient></defs><circle cx="20" cy="19" r="18.500" fill="url(#orb)" stroke="#7fa6bd"/><path d="M10 11C13 9 16 10 19 11L18 18C15 17 12 16.500 9 18Z" fill="#e8502a"/><path d="M21 11.500C24 13 27 13 30 11L29 18C26 20 23 20 20 18.500Z" fill="#8cc63f"/><path d="M9 19.500C12 18 15 18.500 18 19.500L17 26C14 25 11 25 8 26.500Z" fill="#2d9ae0"/><path d="M20 20C23 21.500 26 21.500 29 19.500L28 26C25 28 22 28 19 26.500Z" fill="#f8c82e"/></svg>
<!-- explorer -->
<svg class="a" style="left:73px;top:734px" width="32" height="30" viewBox="0 0 32 30"><path d="M1 3H12L15 6H31V28H1Z" fill="#f0dc8c" stroke="#c9ab52"/><rect x="3" y="1" width="4" height="3" fill="#d8372a"/><rect x="9" y="1" width="4" height="3" fill="#3fae3b"/><rect x="18" y="3" width="4" height="3" fill="#3d8ed8"/><path d="M7 18H24V29H20V22H11V29H7Z" fill="#aac8e0" stroke="#5a8bb0"/><rect x="11" y="14" width="9" height="4" fill="#d2e4f0"/></svg>
<!-- wmp -->
<svg class="a" style="left:137px;top:736px" width="26" height="26" viewBox="0 0 26 26"><path d="M1 1L21 3V25L1 23Z" fill="#bcd7ea" stroke="#8aa8c0"/><path d="M21 3L25 5V23L21 25Z" fill="#6f98b8"/><circle cx="11" cy="13" r="8" fill="#ef8a1c"/><path d="M8 8L16 13 8 18Z" fill="#fff"/></svg>
<div class="tb" style="left:184px"></div>
<svg class="a" style="left:198px;top:733px" width="30" height="30"><use href="#chrome" width="30" height="30"/></svg>
<div class="tb" style="left:246px"></div>
<svg class="a" style="left:258px;top:732px" width="34" height="32" viewBox="0 0 34 32"><path d="M3 5L21 1V30L3 26Z" fill="#0a72c6"/><rect x="19" y="6" width="13" height="12" fill="#fff" stroke="#0a72c6"/><path d="M19 6L26 12 32 6" stroke="#0a72c6" fill="none"/><rect x="20" y="18" width="12" height="12" fill="#e9b878"/><path d="M20 18L26 24 32 18" stroke="#fff" fill="none"/><ellipse cx="11" cy="15" rx="4" ry="5" fill="none" stroke="#fff" stroke-width="2.500"/></svg>
<div class="tb" style="left:308px"></div>
<svg class="a" style="left:321px;top:732px" width="32" height="32" viewBox="0 0 32 32"><rect width="32" height="32" rx="8" fill="#0a85e4"/><circle cx="15" cy="16" r="10.500" fill="none" stroke="#fff" stroke-width="5"/><rect x="16" y="12" width="13" height="7" fill="#fff"/><rect x="18" y="14" width="8" height="2" fill="#0a85e4"/></svg>
<div class="tb" style="left:370px"></div>
<svg class="a" style="left:383px;top:731px" width="32" height="34" viewBox="0 0 32 34"><text x="15" y="27" font-family="Liberation Sans" font-weight="bold" font-size="32" fill="#2e9ee6" text-anchor="middle">e</text><ellipse cx="15" cy="17" rx="15" ry="8" transform="rotate(-40 15 17)" fill="none" stroke="#f3c11f" stroke-width="2"/></svg>
<div class="tb" style="left:432px;width:50px"></div>
<svg class="a" style="left:442px;top:732px" width="30" height="32" viewBox="0 0 30 32"><rect x="12" y="4" width="17" height="24" fill="#fff" stroke="#2a5699"/><path d="M15 8H27M15 11H27M15 14H27M15 17H27M15 20H27M15 23H27" stroke="#2a5699"/><path d="M1 4L17 1V31L1 28Z" fill="#2a5699"/><text x="8.500" y="20" font-family="Liberation Sans" font-weight="bold" font-size="12" fill="#fff" text-anchor="middle">W</text></svg>
<div class="a" style="left:486px;top:729px;width:2px;height:38px;background:#55666c"></div>
<div class="tb" style="left:494px"></div>
<svg class="a" style="left:505px;top:738px" width="36" height="20" viewBox="0 0 36 20"><path d="M0 10L14 3 36 6 22 10Z" fill="#34b8a8"/><path d="M0 10L22 10 36 6 24 12Z" fill="#8ec63f"/><path d="M0 10L22 11 36 12 20 18Z" fill="#1c6fb8"/></svg>
<div class="tb" style="left:556px;background:linear-gradient(#a8b0c8,#7d8aa8 50%,#b0b8d2);border-color:#ccd"></div>
<svg class="a" style="left:571px;top:733px" width="32" height="32"><use href="#rdp" width="32" height="32"/></svg>
<!-- tray -->
<svg class="a" style="left:1155px;top:740px" width="120" height="20" viewBox="0 0 120 20"><path d="M0 11H8L4 7Z" fill="#fff"/><path d="M22 1V19" stroke="#fff" stroke-width="1.500"/><path d="M23 2H32V11H23Z" fill="#fff"/><circle cx="31" cy="13" r="4.500" fill="#d82c20"/><path d="M29 11L33 15M33 11L29 15" stroke="#fff"/><rect x="48" y="3" width="8" height="15" rx="1" fill="none" stroke="#fff" stroke-width="1.300"/><rect x="50" y="1" width="4" height="2" fill="#fff"/><rect x="50" y="6" width="4" height="10" fill="#fff"/><path d="M70 15H72V17H70ZM73.500 13H75.500V17H73.500ZM77 10H79V17H77ZM80.500 6H82.500V17H80.500Z" fill="#fff"/><path d="M94 7H97L101 3V17L97 13H94Z" fill="#fff"/><path d="M103 6C105 8 105 12 103 14M105.500 4C108 7 108 13 105.500 16" stroke="#c4ccd0" fill="none"/></svg>
<div class="t" style="left:1271px;width:80px;text-align:center;top:734px;font-size:12px;color:#fff">18:02</div>
<div class="t" style="left:1271px;width:80px;text-align:center;top:751px;font-size:12px;color:#fff;letter-spacing:-.1px">25/08/2016</div>
<div class="a" style="left:1352px;top:729px;width:14px;height:38px;border:1px solid #6a787e;box-sizing:border-box;background:linear-gradient(#5a6a70,#1c2b32 50%)"></div>

<!-- ============ RIGHT SCREEN ============ -->
<div class="a" style="left:1483px;top:23px;width:1366px;height:877px;background:linear-gradient(#08acfa 0,#08acfa 657px,#0690d0 690px,#04689a 724px,#034a6c 757px,#02283a 790px,#010c14 824px,#000 857px)"></div>

<svg class="a" style="left:1530px;top:111px" width="47" height="47"><use href="#rdp" width="47" height="47"/></svg>
<div class="t" style="left:1513px;width:80px;text-align:center;top:163px;font-size:12px;color:#fff;text-shadow:1px 1px 1px #000,0 1px 2px #000">TopDog</div>
<svg class="a" style="left:1756px;top:217px" width="44" height="44"><use href="#chrome" width="44" height="44"/></svg>
<svg class="a" style="left:1754px;top:247px" width="16" height="16" viewBox="0 0 16 16"><rect x=".5" y=".5" width="15" height="15" fill="#f4f4f4" stroke="#778"/><path d="M5 13C4 8 7 5 10 5V3L14 7 10 10V8C8 8 6 10 5 13Z" fill="#1c5aa8"/></svg>
<div class="t" style="left:1738px;width:80px;text-align:center;top:267px;font-size:12px;color:#fff;text-shadow:1px 1px 1px #000,0 1px 2px #000">Google</div>
<div class="t" style="left:1738px;width:80px;text-align:center;top:282px;font-size:12px;color:#fff;text-shadow:1px 1px 1px #000,0 1px 2px #000">Chrome</div>

<!-- Think logo -->
<svg class="a" style="left:2340px;top:615px" width="180" height="180" viewBox="2340 615 180 180">
<g font-family="'Liberation Sans',sans-serif" font-weight="bold" font-size="115" fill="#fff" stroke="#fff" stroke-width="6" stroke-linejoin="miter">
<text transform="translate(2347.300 714) scale(.52 1)">T</text>
<text transform="translate(2384.800 714) scale(.5 1)">h</text>
<text transform="translate(2421 714) scale(.5 1)">i</text>
<text transform="translate(2438.800 714) scale(.5 1)">n</text>
<text transform="translate(2474.500 714) scale(.5 1)">k</text>
</g>
<g mask="url(#rm)" font-family="'Liberation Sans',sans-serif" font-weight="bold" font-size="115" fill="#fff" stroke="#fff" stroke-width="6" aria-hidden="true">
<text transform="translate(2347.300 720) scale(.52 -1)">T</text>
<text transform="translate(2384.800 720) scale(.5 -1)">h</text>
<text transform="translate(2421 720) scale(.5 -1)">i</text>
<text transform="translate(2438.800 720) scale(.5 -1)">n</text>
<text transform="translate(2474.500 720) scale(.5 -1)">k</text>
</g>
<rect x="2420" y="622" width="18" height="28" fill="#08acfa"/>
<rect x="2423.500" y="645" width="11.500" height="10" fill="#fff"/>
<ellipse cx="2429" cy="633" rx="8" ry="7.700" fill="#f21b12"/>
</svg>
</body></html>
